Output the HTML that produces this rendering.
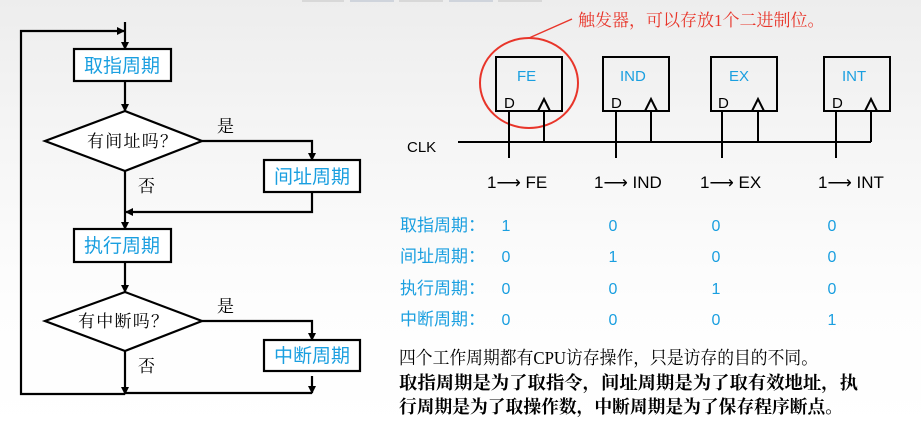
<!DOCTYPE html>
<html><head><meta charset="utf-8"><style>
html,body{margin:0;padding:0;width:921px;height:433px;overflow:hidden;background:linear-gradient(#ededed 0px,#f6f6f6 150px,#fdfdfd 300px,#fff 433px);}
svg{position:absolute;left:0;top:0}
.cn{font-family:"Liberation Serif","Noto Serif CJK SC",serif;}
.bl{fill:#1a9fe0;font-family:"Liberation Sans","Noto Sans CJK SC",sans-serif;}
.ss{font-family:"Liberation Sans","Noto Sans CJK SC",sans-serif;}
</style></head><body>
<svg width="921" height="433" viewBox="0 0 921 433">
<defs><marker id="a" markerWidth="8" markerHeight="8" refX="7" refY="4" orient="auto" markerUnits="userSpaceOnUse"><path d="M0,0 L8,4 L0,8 Z" fill="#000"/></marker></defs>
<g fill="#d8d8d8"><rect x="302" y="0" width="42" height="2"/><rect x="350" y="0" width="44" height="2" fill="#cfd4dc"/><rect x="399" y="0" width="44" height="2"/><rect x="449" y="0" width="44" height="2" fill="#cfd4dc"/><rect x="498" y="0" width="44" height="2"/></g>
<g stroke="#000" stroke-width="2.2" fill="none">
<line x1="125" y1="22" x2="125" y2="49" marker-end="url(#a)"/>
<polyline points="125,394 21,394 21,31 124,31" marker-end="url(#a)"/>
<rect x="74" y="49" width="97" height="32" fill="#fff"/>
<line x1="125" y1="81" x2="125" y2="111" marker-end="url(#a)"/>
<polygon points="125,111 202,141 125,171 45,141" fill="#fff"/>
<polyline points="202,141 312,141 312,160" marker-end="url(#a)"/>
<rect x="264" y="160" width="96" height="32" fill="#fff"/>
<polyline points="312,192 312,212 126,212" marker-end="url(#a)"/>
<line x1="125" y1="171" x2="125" y2="229" marker-end="url(#a)"/>
<rect x="74" y="229" width="97" height="33" fill="#fff"/>
<line x1="125" y1="262" x2="125" y2="292" marker-end="url(#a)"/>
<polygon points="125,292 202,321 125,351 45,321" fill="#fff"/>
<polyline points="202,321 312,321 312,340" marker-end="url(#a)"/>
<rect x="264" y="340" width="96" height="31" fill="#fff"/>
<line x1="312" y1="376" x2="312" y2="393" marker-end="url(#a)"/>
<line x1="312" y1="393" x2="125" y2="393"/>
<line x1="125" y1="351" x2="125" y2="394" marker-end="url(#a)"/>
</g>
<g class="bl" font-size="19" text-anchor="middle">
<text x="122" y="72">取指周期</text><text x="312" y="183">间址周期</text>
<text x="122" y="252">执行周期</text><text x="312" y="362">中断周期</text>
</g>
<g class="cn" font-size="17">
<text x="87" y="147" textLength="90">有间址吗？</text>
<text x="78" y="327" textLength="90">有中断吗？</text>
<text x="217" y="132">是</text><text x="217" y="312">是</text>
<text x="138" y="192">否</text><text x="138" y="372">否</text>
</g>
<text x="578" y="26" fill="#e8352a" font-size="17" class="cn">触发器，可以存放1个二进制位。</text>
<line x1="572" y1="19" x2="529" y2="38" stroke="#e8352a" stroke-width="1.5"/>
<ellipse cx="529" cy="83" rx="49" ry="45" fill="none" stroke="#e8352a" stroke-width="2"/>
<g stroke="#000" stroke-width="2" fill="none">
<rect x="496" y="57" width="66" height="54"/><rect x="603" y="57" width="66" height="54"/>
<rect x="711" y="57" width="66" height="54"/><rect x="824" y="57" width="66" height="54"/>
<line x1="458" y1="142" x2="871" y2="142"/>
<line x1="509" y1="111" x2="509" y2="158"/><line x1="544" y1="111" x2="544" y2="142"/>
<line x1="616" y1="111" x2="616" y2="158"/><line x1="651" y1="111" x2="651" y2="142"/>
<line x1="722" y1="111" x2="722" y2="158"/><line x1="758" y1="111" x2="758" y2="142"/>
<line x1="836" y1="111" x2="836" y2="158"/><line x1="871" y1="111" x2="871" y2="142"/>
<path d="M538,111 L544,99 L550,111"/><path d="M645,111 L651,99 L657,111"/><path d="M752,111 L758,99 L764,111"/><path d="M865,111 L871,99 L877,111"/>
</g>
<g class="ss" font-size="15">
<text x="517" y="81" fill="#1a9fe0">FE</text><text x="620" y="81" fill="#1a9fe0">IND</text>
<text x="729" y="81" fill="#1a9fe0">EX</text><text x="842" y="81" fill="#1a9fe0">INT</text>
<text x="504" y="108">D</text><text x="611" y="108">D</text><text x="718" y="108">D</text><text x="832" y="108">D</text>
<text x="407" y="152">CLK</text>
</g>
<g class="ss" font-size="17">
<text x="487" y="188">1⟶ FE</text><text x="594" y="188">1⟶ IND</text>
<text x="700" y="188">1⟶ EX</text><text x="818" y="188">1⟶ INT</text>
</g>
<g class="bl" font-size="17">
<text x="400" y="231">取指周期：</text><text x="400" y="262">间址周期：</text>
<text x="400" y="294">执行周期：</text><text x="400" y="325">中断周期：</text>
</g>
<g class="bl" font-size="16" text-anchor="middle">
<text x="506" y="231">1</text><text x="613" y="231">0</text><text x="716" y="231">0</text><text x="832" y="231">0</text>
<text x="506" y="262">0</text><text x="613" y="262">1</text><text x="716" y="262">0</text><text x="832" y="262">0</text>
<text x="506" y="294">0</text><text x="613" y="294">0</text><text x="716" y="294">1</text><text x="832" y="294">0</text>
<text x="506" y="325">0</text><text x="613" y="325">0</text><text x="716" y="325">0</text><text x="832" y="325">1</text>
</g>
<g class="cn" font-size="18">
<text x="399" y="364" textLength="419" lengthAdjust="spacingAndGlyphs">四个工作周期都有CPU访存操作，只是访存的目的不同。</text>
<text x="399" y="389" font-weight="bold" textLength="459" lengthAdjust="spacingAndGlyphs">取指周期是为了取指令，间址周期是为了取有效地址，执</text>
<text x="399" y="413" font-weight="bold" textLength="444" lengthAdjust="spacingAndGlyphs">行周期是为了取操作数，中断周期是为了保存程序断点。</text>
</g>
</svg>
</body></html>
